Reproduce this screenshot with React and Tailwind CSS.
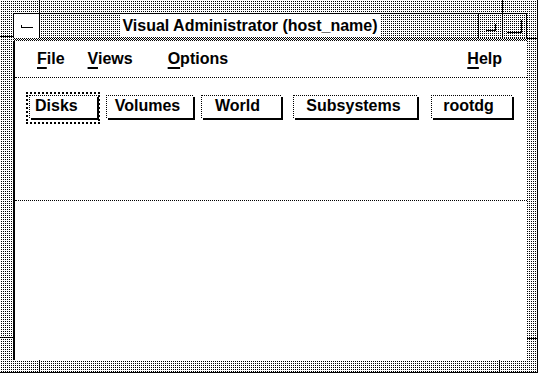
const menus = [
  { key: 'F', rest: 'ile', cls: 'ml-[22px]' },
  { key: 'V', rest: 'iews', cls: 'ml-[23px]' },
  { key: 'O', rest: 'ptions', cls: 'ml-[35px]' },
];

const buttons = [
  { label: 'Volumes', cls: 'ml-[6px] w-[87px] pr-[5px]' },
  { label: 'World', cls: 'ml-[8px] w-[80px] pr-[8px]' },
  { label: 'Subsystems', cls: 'ml-[12px] w-[124px] pr-[4px]' },
  { label: 'rootdg', cls: 'ml-[14px] w-[81px] pr-[7px]' },
];

// stipple used by the mwm frame
const stipple =
  'bg-[image:conic-gradient(from_90deg_at_1px_1px,#000_25%,#fff_0)] bg-[length:2px_2px]';
const checker =
  'bg-[image:repeating-conic-gradient(#000_0_25%,#fff_0_50%)] bg-[length:2px_2px]';

const Mnemonic = ({ letter, rest, className }) => (
  <span className={className}>
    <span className="underline decoration-2 underline-offset-[3px]">{letter}</span>
    {rest}
  </span>
);

const PushButton = ({ label, className }) => (
  <div
    className={`flex h-[23px] border-t border-l border-dotted border-black bg-white pt-[2px] shadow-[2px_2px_0_#000] ${className}`}
  >
    {label}
  </div>
);

export default function App() {
  return (
    <div className="h-[375px] w-[544px] overflow-hidden bg-white font-['Liberation_Sans',Arial,sans-serif] text-[16px] font-bold leading-none text-black">
      <div
        className={`relative flex h-[373px] w-[538px] flex-col border-r border-b border-black pt-[13px] pr-[10px] pb-[12px] pl-[13px] ${stipple}`}
      >
        {/* resize handle separators */}
        <div className="absolute top-0 left-[39px] h-[13px] w-px bg-black" />
        <div className="absolute top-[36px] left-0 h-px w-[13px] bg-black" />
        <div className="absolute top-0 left-[502px] h-[13px] w-px bg-black" />
        <div className="absolute top-[38px] right-0 h-px w-[10px] bg-black" />
        <div className="absolute bottom-0 left-[39px] h-[12px] w-px bg-black" />
        <div className="absolute top-[337px] left-0 h-px w-[13px] bg-black" />
        <div className="absolute bottom-0 left-[499px] h-[12px] w-px bg-black" />
        <div className="absolute top-[338px] right-0 h-px w-[10px] bg-black" />

        {/* title bar */}
        <div className="flex h-[25px] border-t border-l border-black">
          <div className="flex w-[26px] items-center justify-center border-r border-black bg-white">
            <div className="h-[3px] w-[12px] border-b border-l border-black" />
          </div>
          <div className={`flex flex-1 items-center justify-center pr-[18px] ${stipple}`}>
            <span className="bg-white px-[2px] py-[3px]">Visual Administrator (host_name)</span>
          </div>
          <div className={`flex w-[24px] items-center justify-center border-l border-black ${stipple}`}>
            <div className="mt-[2px] h-[7px] w-[10px] border-r border-b border-black" />
          </div>
          <div className={`flex w-[25px] items-center justify-center border-x border-black ${stipple}`}>
            <div className="h-[13px] w-[15px] border-r border-b border-black" />
          </div>
        </div>
        <div className={`h-[3px] ${checker}`} />

        {/* client area */}
        <div className="flex flex-1 flex-col border-l-2 border-black bg-white">
          <div className="flex h-[37px] items-center border-b border-dotted border-black">
            {menus.map((m) => (
              <Mnemonic key={m.key} letter={m.key} rest={m.rest} className={m.cls} />
            ))}
            <Mnemonic letter="H" rest="elp" className="mr-[25px] ml-auto" />
          </div>

          <div className="h-[123px] border-b border-dotted border-black pt-[14px]">
            <div className="flex items-start">
              <div className="ml-[11px] border-2 border-dotted border-black p-[1px] pb-[4px]">
                <PushButton label="Disks" className="w-[68px] pl-[5px]" />
              </div>
              {buttons.map((b) => (
                <div key={b.label} className="pt-[3px]">
                  <PushButton label={b.label} className={`justify-center ${b.cls}`} />
                </div>
              ))}
            </div>
          </div>

          <div className="flex-1" />
        </div>
      </div>
    </div>
  );
}
